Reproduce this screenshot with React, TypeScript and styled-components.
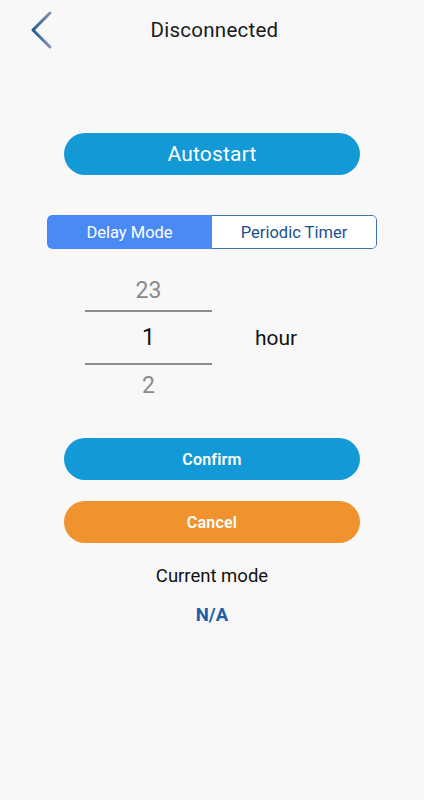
import React, { useState } from "react";
import styled, { createGlobalStyle } from "styled-components";

const Global = createGlobalStyle`
  html, body { margin: 0; padding: 0; background: #f8f8f8; }
  body { font-family: Roboto, "Noto Sans", Arial, sans-serif; }
  * { box-sizing: border-box; }
`;

const Page = styled.div`
  width: 424px;
  height: 800px;
  background: #f8f8f8;
  display: flex;
  flex-direction: column;
  align-items: center;
`;

const Header = styled.div`
  width: 100%;
  height: 60px;
  display: grid;
  grid-template-columns: 60px 1fr 60px;
  align-items: center;
`;

const BackButton = styled.button`
  border: none;
  background: none;
  padding: 0 0 0 28px;
  height: 60px;
  display: flex;
  align-items: center;
  cursor: pointer;
`;

const Title = styled.div`
  text-align: center;
  font-size: 20.5px;
  color: #1a1a1a;
  letter-spacing: 0.25px;
  padding-left: 5px;
`;

const Pill = styled.button<{ $bg: string; $size: number; $bold?: boolean }>`
  width: 296px;
  height: 42px;
  border: none;
  border-radius: 21px;
  background: ${(p) => p.$bg};
  color: #fff;
  font-family: Roboto, Arial, sans-serif;
  font-size: ${(p) => p.$size}px;
  font-weight: ${(p) => (p.$bold ? 600 : 400)};
  letter-spacing: 0.2px;
  display: flex;
  align-items: center;
  justify-content: center;
  cursor: pointer;
`;

const Spacer = styled.div<{ $h: number }>`
  height: ${(p) => p.$h}px;
  flex: none;
`;

const Segment = styled.div`
  width: 330px;
  height: 34px;
  margin-top: 40px;
  display: grid;
  grid-template-columns: 165px 1fr;
  border-radius: 5px;
  overflow: hidden;
`;

const SegItem = styled.div<{ $active?: boolean; $side: "left" | "right" }>`
  display: flex;
  align-items: center;
  justify-content: center;
  font-size: 16.5px;
  background: ${(p) => (p.$active ? "#4a8af4" : "#fff")};
  color: ${(p) => (p.$active ? "#fff" : "#1d4f8c")};
  border: ${(p) => (p.$active ? "none" : "1px solid #3f73ad")};
  ${(p) => (p.$side === "right" ? "border-left: none;" : "border-right: none;")}
  border-radius: ${(p) => (p.$side === "left" ? "5px 0 0 5px" : "0 5px 5px 0")};
  cursor: pointer;
`;

const PickerRow = styled.div`
  width: 424px;
  margin-top: 22px;
  display: grid;
  grid-template-columns: 85px 127px 1fr;
  align-items: center;
`;

const Wheel = styled.div`
  grid-column: 2;
  display: flex;
  flex-direction: column;
  align-items: stretch;
`;

const WheelItem = styled.div<{ $selected?: boolean; $h: number }>`
  height: ${(p) => p.$h}px;
  display: flex;
  align-items: center;
  justify-content: center;
  font-size: 23px;
  color: ${(p) => (p.$selected ? "#111" : "#8a8a8a")};
  border-top: ${(p) => (p.$selected ? "2px solid #8c8c8c" : "none")};
  border-bottom: ${(p) => (p.$selected ? "2px solid #8c8c8c" : "none")};
`;

const Unit = styled.div`
  padding-left: 43px;
  font-size: 21px;
  color: #111;
`;

const Buttons = styled.div`
  margin-top: 33px;
  display: flex;
  flex-direction: column;
  gap: 21px;
`;

const Label = styled.div`
  margin-top: 22px;
  font-size: 18.5px;
  color: #111;
`;

const Value = styled.div`
  margin-top: 17px;
  font-size: 18.5px;
  font-weight: 700;
  color: #1f5ea8;
`;

const Chevron = () => (
  <svg width="26" height="40" viewBox="0 0 26 40">
    <defs>
      <linearGradient id="cg" x1="0" y1="0" x2="1" y2="0">
        <stop offset="0" stopColor="#1d5893" />
        <stop offset="1" stopColor="#8593ad" />
      </linearGradient>
    </defs>
    <path d="M22 3 L5 20 L22 37" fill="none" stroke="url(#cg)" strokeWidth="3" strokeLinecap="round" strokeLinejoin="round" />
  </svg>
);

export default function App() {
  const [mode, setMode] = useState(0);
  return (
    <Page>
      <Global />
      <Header>
        <BackButton aria-label="back">
          <Chevron />
        </BackButton>
        <Title>Disconnected</Title>
        <div />
      </Header>
      <Spacer $h={73} />
      <Pill $bg="#1399d6" $size={21}>Autostart</Pill>
      <Segment>
        <SegItem $side="left" $active={mode === 0} onClick={() => setMode(0)}>Delay Mode</SegItem>
        <SegItem $side="right" $active={mode === 1} onClick={() => setMode(1)}>Periodic Timer</SegItem>
      </Segment>
      <PickerRow>
        <Wheel>
          <WheelItem $h={39}>23</WheelItem>
          <WheelItem $h={55} $selected>1</WheelItem>
          <WheelItem $h={40}>2</WheelItem>
        </Wheel>
        <Unit>hour</Unit>
      </PickerRow>
      <Buttons>
        <Pill $bg="#1399d6" $size={16} $bold>Confirm</Pill>
        <Pill $bg="#f0922d" $size={16} $bold>Cancel</Pill>
      </Buttons>
      <Label>Current mode</Label>
      <Value>N/A</Value>
    </Page>
  );
}
